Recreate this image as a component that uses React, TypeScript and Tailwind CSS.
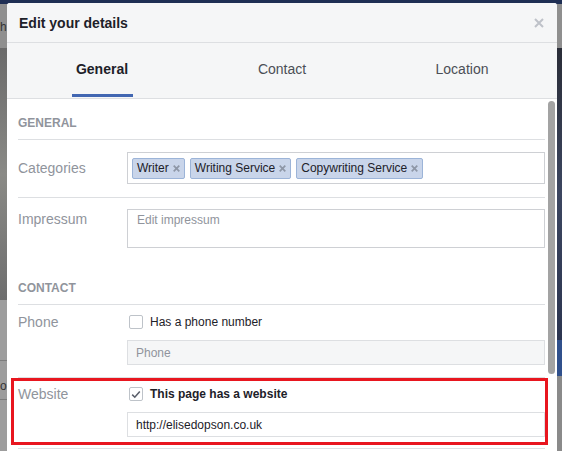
import React from "react";

const XIcon = ({ size = 7, color = "#8d949e", w = 1.6 }: { size?: number; color?: string; w?: number }) => (
  <svg width={size} height={size} viewBox="0 0 10 10" className="shrink-0">
    <path d="M1 1 L9 9 M9 1 L1 9" stroke={color} strokeWidth={w * (10 / size)} strokeLinecap="butt" />
  </svg>
);

const Tag = ({ label }: { label: string }) => (
  <div className="flex h-[21px] items-center gap-[4px] rounded-[2px] border border-[#9cb4d8] bg-[#c9d5ea] pl-[4px] pr-[4px] text-[12px] leading-none text-[#1d2129]">
    <span>{label}</span>
    <XIcon size={7} color="#8e97a7" w={1.7} />
  </div>
);

const Checkbox = ({ checked }: { checked?: boolean }) => (
  <div className="flex h-[14px] w-[14px] items-center justify-center rounded-[2px] border border-[#bec3c9] bg-white">
    {checked && (
      <svg width="10" height="9" viewBox="0 0 10 9">
        <path d="M1.2 4.6 L3.8 7.2 L8.8 1.4" fill="none" stroke="#5b606b" strokeWidth="1.6" />
      </svg>
    )}
  </div>
);

const Divider = () => <div className="h-px bg-[#dddfe2]" />;

const Label = ({ children, className = "" }: { children: React.ReactNode; className?: string }) => (
  <div className={"w-[109px] shrink-0 text-[14px] leading-[16px] text-[#90949c] " + className}>{children}</div>
);

export default function App() {
  return (
    <div className="relative h-[451px] w-[562px] overflow-hidden bg-[#3a3f4c] font-['Liberation_Sans',Arial,sans-serif]">
      {/* dimmed page behind the dialog */}
      <div className="absolute left-0 top-0 h-[4px] w-full bg-[#1f2f54]" />
      <div className="absolute left-0 top-[4px] h-[44px] w-[8px] bg-[#8f8f8f] text-[12px] leading-[46px] text-[#333]">h</div>
      <div className="absolute left-0 top-[48px] h-[252px] w-[8px] bg-gradient-to-b from-[#6a6a6a] via-[#8a8a86] to-[#6e6e6e]" />
      <div className="absolute left-0 top-[300px] h-[151px] w-[8px] bg-[#9d9d9d]">
        <div className="mt-[60px] h-px bg-[#7d7d7d]" />
        <div className="mt-[18px] text-[12px] leading-[14px] text-[#333]">o</div>
        <div className="mt-[6px] h-px bg-[#7d7d7d]" />
      </div>
      <div className="absolute right-0 top-[4px] h-[44px] w-[5px] bg-[#8f8f8f]" />
      <div className="absolute right-0 top-[48px] h-[292px] w-[5px] bg-gradient-to-b from-[#2a2d38] via-[#3c4660] to-[#2c3550]" />
      <div className="absolute right-0 top-[340px] h-[36px] w-[5px] bg-[#30508c]" />
      <div className="absolute right-0 top-[376px] h-[75px] w-[5px] bg-[#8a8a8a]" />

      {/* dialog */}
      <div className="relative ml-[7px] mt-[3px] flex h-[448px] w-[550px] flex-col overflow-hidden rounded-t-[3px] bg-white">
        <div className="flex h-[40px] shrink-0 items-center justify-between border-b border-[#dddfe2] bg-[#f5f6f7] pl-[12px] pr-[13px]">
          <div className="text-[14px] font-bold leading-[16px] text-[#1d2129]">Edit your details</div>
          <XIcon size={10} color="#bec2c9" w={2} />
        </div>

        <div className="grid h-[56px] shrink-0 grid-cols-3 border-b border-[#dddfe2] bg-[#f5f6f7] px-[5px]">
          <div className="flex flex-col items-center">
            <div className="mt-[18px] text-[14px] font-bold leading-[16px] text-[#1d2129]">General</div>
            <div className="mb-[1px] mt-auto h-[3px] w-[61px] bg-[#4267b2]" />
          </div>
          <div className="flex flex-col items-center">
            <div className="mt-[18px] text-[14px] leading-[16px] text-[#4b4f56]">Contact</div>
          </div>
          <div className="flex flex-col items-center">
            <div className="mt-[18px] text-[14px] leading-[16px] text-[#4b4f56]">Location</div>
          </div>
        </div>

        <div className="relative flex-1 bg-white pl-[11px] pr-[12px]">
          {/* GENERAL */}
          <div className="pb-[8px] pt-[16px] text-[12px] font-bold leading-[16px] text-[#90949c]">GENERAL</div>
          <Divider />
          <div className="flex items-center pb-[13px] pt-[12px]">
            <Label>Categories</Label>
            <div className="flex h-[32px] flex-1 items-center gap-[5px] border border-[#ced0d4] bg-white pl-[4px]">
              <Tag label="Writer" />
              <Tag label="Writing Service" />
              <Tag label="Copywriting Service" />
            </div>
          </div>
          <Divider />
          <div className="flex items-start pb-[12px] pt-[11px]">
            <Label className="mt-[2px]">Impressum</Label>
            <div className="h-[39px] flex-1 border border-[#ced0d4] bg-white pl-[9px] pt-[2px] text-[12px] leading-[16px] text-[#90949c]">
              Edit impressum
            </div>
          </div>

          {/* CONTACT */}
          <div className="pb-[8px] pt-[20px] text-[12px] font-bold leading-[16px] text-[#90949c]">CONTACT</div>
          <Divider />
          <div className="flex items-start pb-[12px] pt-[9px]">
            <Label>Phone</Label>
            <div className="flex flex-1 flex-col">
              <div className="flex h-[16px] items-center gap-[7px] pl-[2px] text-[12px] text-[#1d2129]">
                <Checkbox />
                <span>Has a phone number</span>
              </div>
              <div className="mt-[10px] flex h-[25px] items-center border border-[#dddfe2] bg-[#f5f6f7] pl-[8px] text-[12px] text-[#90949c]">
                Phone
              </div>
            </div>
          </div>
          <Divider />
          <div className="flex items-start pb-[11px] pt-[8px]">
            <Label>Website</Label>
            <div className="flex flex-1 flex-col">
              <div className="flex h-[16px] items-center gap-[7px] pl-[2px] text-[12px] font-bold text-[#1d2129]">
                <Checkbox checked />
                <span>This page has a website</span>
              </div>
              <div className="mt-[10px] flex h-[25px] items-center border border-[#dddfe2] bg-white pl-[8px] text-[12px] text-[#1d2129]">
                http://elisedopson.co.uk
              </div>
            </div>
          </div>
          <Divider />

          {/* scrollbar */}
          <div className="absolute right-[2px] top-[2px] h-[273px] w-[7px] rounded-[4px] bg-[#a3a3a3]" />
          {/* red highlight annotation */}
          <div className="absolute left-[4px] top-[279px] h-[67px] w-[537px] border-[3px] border-[#e8161f]" />
        </div>
      </div>
    </div>
  );
}
